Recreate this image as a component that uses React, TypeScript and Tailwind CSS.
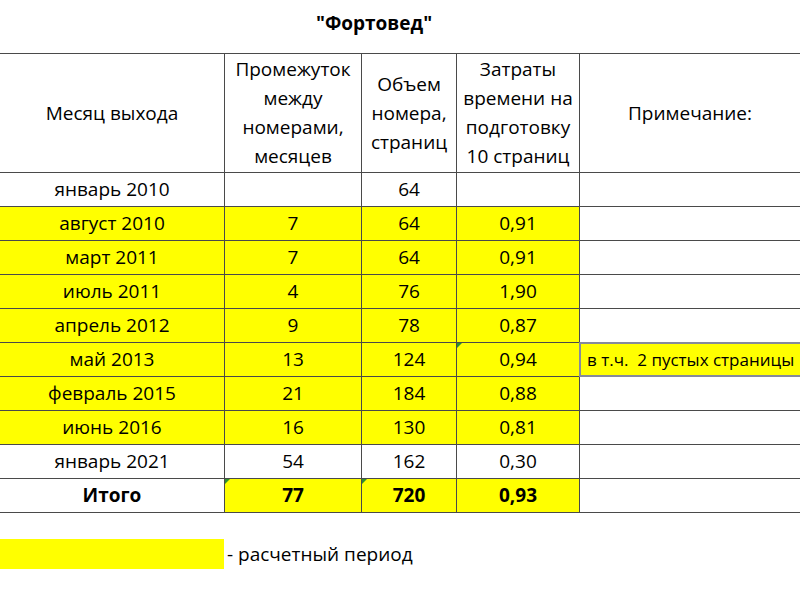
import React from "react";

type Row = {
  month: string;
  gap: string;
  pages: string;
  cost: string;
  note?: string;
  yellow: boolean;
  mark?: boolean;
};

const rows: Row[] = [
  { month: "январь 2010", gap: "", pages: "64", cost: "", yellow: false },
  { month: "август 2010", gap: "7", pages: "64", cost: "0,91", yellow: true },
  { month: "март 2011", gap: "7", pages: "64", cost: "0,91", yellow: true },
  { month: "июль 2011", gap: "4", pages: "76", cost: "1,90", yellow: true },
  { month: "апрель 2012", gap: "9", pages: "78", cost: "0,87", yellow: true },
  { month: "май 2013", gap: "13", pages: "124", cost: "0,94", note: "в т.ч.  2 пустых страницы", yellow: true, mark: true },
  { month: "февраль 2015", gap: "21", pages: "184", cost: "0,88", yellow: true },
  { month: "июнь 2016", gap: "16", pages: "130", cost: "0,81", yellow: true },
  { month: "январь 2021", gap: "54", pages: "162", cost: "0,30", yellow: false },
];

function Marker() {
  return (
    <span className="absolute left-0 top-0 h-0 w-0 border-t-[5px] border-r-[5px] border-t-[#2f8f2f] border-r-transparent" />
  );
}

function Cell({ children, yellow, className = "" }: { children?: React.ReactNode; yellow?: boolean; className?: string }) {
  return (
    <div className={`relative flex h-[33px] items-center justify-center ${yellow ? "bg-[#ffff00]" : "bg-white"} ${className}`}>
      {children}
    </div>
  );
}

export default function App() {
  return (
    <div className="h-[592px] w-[800px] overflow-hidden bg-white text-[19px] text-black" style={{ fontFamily: '"Open Sans", "Noto Sans", sans-serif' }}>
      <div className="flex h-[53px] items-center pl-[316px] pb-[6px] text-[19px] font-bold">"Фортовед"</div>

      <div className="grid grid-cols-[224px_136px_94px_122px_1fr] gap-px border-y border-[#4a4a4a] bg-[#4a4a4a]">
        <div className="flex h-[118px] items-center justify-center bg-white">Месяц выхода</div>
        <div className="flex h-[118px] flex-col items-center justify-center bg-white text-center leading-[29px]">
          <span>Промежуток</span>
          <span>между</span>
          <span>номерами,</span>
          <span>месяцев</span>
        </div>
        <div className="flex h-[118px] flex-col items-center justify-center bg-white text-center leading-[29px]">
          <span>Объем</span>
          <span>номера,</span>
          <span>страниц</span>
        </div>
        <div className="flex h-[118px] flex-col items-center justify-center bg-white text-center leading-[29px]">
          <span>Затраты</span>
          <span>времени на</span>
          <span>подготовку</span>
          <span>10 страниц</span>
        </div>
        <div className="flex h-[118px] items-center justify-center bg-white">Примечание:</div>

        {rows.map((r) => (
          <React.Fragment key={r.month}>
            <Cell yellow={r.yellow}>{r.month}</Cell>
            <Cell yellow={r.yellow}>{r.gap}</Cell>
            <Cell yellow={r.yellow}>{r.pages}</Cell>
            <Cell yellow={r.yellow}>
              {r.mark && <Marker />}
              {r.cost}
            </Cell>
            {r.note ? (
              <Cell yellow className="justify-start whitespace-pre pl-[7px] text-[17px]">
                <span className="absolute -bottom-px -left-px -right-[10px] -top-px border-2 border-[#868a9c]" />
                {r.note}
              </Cell>
            ) : (
              <Cell />
            )}
          </React.Fragment>
        ))}

        <Cell className="font-bold">Итого</Cell>
        <Cell yellow className="font-bold">
          <Marker />
          77
        </Cell>
        <Cell yellow className="font-bold">
          <Marker />
          720
        </Cell>
        <Cell yellow className="font-bold">0,93</Cell>
        <Cell />
      </div>

      <div className="mt-[26px] flex items-center">
        <div className="h-[30px] w-[224px] bg-[#ffff00]" />
        <span className="pl-[3px]">- расчетный период</span>
      </div>
    </div>
  );
}
